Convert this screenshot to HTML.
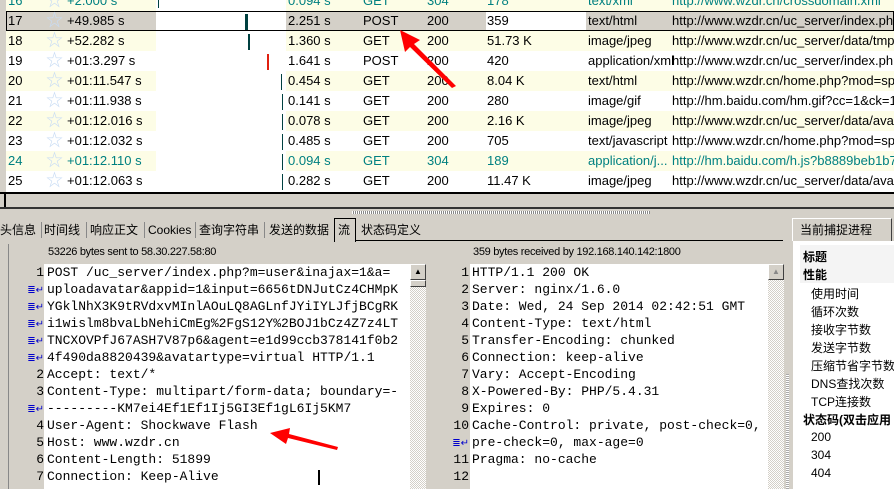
<!DOCTYPE html>
<html><head><meta charset="utf-8"><style>
*{margin:0;padding:0;box-sizing:border-box}
body{width:894px;height:489px;overflow:hidden;background:#d4d0c8;position:relative;font-family:"Liberation Sans","Noto Sans CJK SC",sans-serif;font-size:12px;color:#000}
.a{position:absolute;white-space:nowrap}
.mono{font-family:"Liberation Mono",monospace;font-size:13px}
.tab{position:absolute;top:219px;line-height:22px;font-size:12px;white-space:nowrap}
.sep{position:absolute;top:222px;width:1px;height:16px;background:#888}
</style></head><body>
<div class="a" style="left:6px;top:0;width:888px;height:193px;background:#fff"></div>
<div id="g"></div>
<div class="a" style="left:0;top:192px;width:894px;height:2px;background:#000"></div>
<div class="a" style="left:4px;top:194px;width:2px;height:14px;background:#000"></div>
<div class="a" style="left:0;top:207px;width:894px;height:2px;background:#333"></div>
<div class="a" style="left:352px;top:211px;width:298px;height:3px;background:repeating-linear-gradient(90deg,#fff 0 1px,#888 1px 2px)"></div>
<!-- tabs -->
<div class="tab" style="left:0">头信息</div><div class="sep" style="left:41px"></div>
<div class="tab" style="left:44px">时间线</div><div class="sep" style="left:86px"></div>
<div class="tab" style="left:90px">响应正文</div><div class="sep" style="left:144px"></div>
<div class="tab" style="left:148px">Cookies</div><div class="sep" style="left:195px"></div>
<div class="tab" style="left:199px">查询字符串</div><div class="sep" style="left:264px"></div>
<div class="tab" style="left:269px">发送的数据</div>
<div class="a" style="left:334px;top:218px;width:22px;height:24px;border:1px solid #000;border-bottom:none;background:#d4d0c8;font-size:12px;line-height:22px;padding-left:3px">流</div>
<div class="tab" style="left:361px">状态码定义</div>
<div class="a" style="left:355px;top:240px;width:428px;height:1px;background:#000"></div>
<div class="a" style="left:8px;top:244px;width:1px;height:245px;background:#888"></div>
<!-- left request -->
<div class="a" style="left:48px;top:246px;font-size:11px;letter-spacing:-0.3px">53226 bytes sent to 58.30.227.58:80</div>
<div class="a" style="left:44px;top:264px;width:366px;height:225px;background:#fff"></div>
<div class="a" style="left:410px;top:264px;width:16px;height:225px;background:repeating-conic-gradient(#fff 0 25%,#d4d0c8 0 50%) 0 0/2px 2px"></div>
<div class="a" style="left:410px;top:264px;width:16px;height:16px;background:#d4d0c8;border:1px solid;border-color:#fff #404040 #404040 #fff;font-size:8px;text-align:center;line-height:13px">▲</div>
<div class="a" style="left:410px;top:280px;width:16px;height:7px;background:#d4d0c8;border:1px solid;border-color:#fff #404040 #404040 #fff"></div>
<div id="req"></div>
<div class="a" style="left:318px;top:470px;width:2px;height:15px;background:#000"></div>
<!-- right response -->
<div class="a" style="left:473px;top:246px;font-size:11px;letter-spacing:-0.3px">359 bytes received by 192.168.140.142:1800</div>
<div class="a" style="left:470px;top:264px;width:298px;height:225px;background:#fff"></div>
<div class="a" style="left:768px;top:264px;width:16px;height:225px;background:repeating-conic-gradient(#fff 0 25%,#d4d0c8 0 50%) 0 0/2px 2px"></div>
<div class="a" style="left:768px;top:264px;width:16px;height:16px;background:#d4d0c8;border:1px solid;border-color:#fff #404040 #404040 #fff;font-size:8px;text-align:center;line-height:13px;color:#888">▲</div>
<div class="a" style="left:786px;top:374px;width:3px;height:115px;background:repeating-linear-gradient(#aaa 0 1px,#fff 1px 2px)"></div>
<div id="res"></div>
<!-- side panel -->
<div class="a" style="left:792px;top:218px;width:100px;height:23px;border:1px solid #fff;border-right-color:#404040;border-bottom:none;font-size:12px;line-height:22px;padding-left:7px">当前捕捉进程</div>
<div class="a" style="left:793px;top:241px;width:101px;height:248px;background:#fff"></div>
<div class="a" style="left:800px;top:245px;width:94px;height:38px;background:#f4f4f4"></div>
<div class="a" style="left:803px;top:249px;font-weight:bold;font-size:12px;line-height:17.5px">标题<br>性能</div>
<div class="a" style="left:811px;top:285px;font-size:12px;line-height:18px">使用时间<br>循环次数<br>接收字节数<br>发送字节数<br>压缩节省字节数<br>DNS查找次数<br>TCP连接数</div>
<div class="a" style="left:803px;top:411px;font-weight:bold;font-size:12px">状态码(双击应用</div>
<div class="a" style="left:811px;top:428px;font-size:12px;line-height:18px">200<br>304<br>404</div>
<svg class="a" style="left:0;top:0" width="894" height="489">
<polygon points="400,30 420,40 414,44 456,86 452,88 410,47 405,52" fill="#f00"/>
<polygon points="270,433 290,428 289,434 338,447 337,450 288,438 286,444" fill="#f00"/>
</svg>
<script>
var rows=[
[16,"+2.000 s",null,"0.094 s","GET","304","178","text/xml","http://www.wzdr.cn/crossdomain.xml",1],
[17,"+49.985 s",[245,3,"#004040"],"2.251 s","POST","200","359","text/html","http://www.wzdr.cn/uc_server/index.php",0],
[18,"+52.282 s",[248,2,"#004040"],"1.360 s","GET","200","51.73 K","image/jpeg","http://www.wzdr.cn/uc_server/data/tmp",0],
[19,"+01:3.297 s",[267,2,"#e02010"],"1.641 s","POST","200","420","application/xml","http://www.wzdr.cn/uc_server/index.php",0],
[20,"+01:11.547 s",[281,1,"#004040"],"0.454 s","GET","200","8.04 K","text/html","http://www.wzdr.cn/home.php?mod=spa",0],
[21,"+01:11.938 s",[282,1,"#004040"],"0.141 s","GET","200","280","image/gif","http://hm.baidu.com/hm.gif?cc=1&ck=1",0],
[22,"+01:12.016 s",[282,1,"#004040"],"0.078 s","GET","200","2.16 K","image/jpeg","http://www.wzdr.cn/uc_server/data/ava",0],
[23,"+01:12.032 s",[282,1,"#004040"],"0.485 s","GET","200","705","text/javascript","http://www.wzdr.cn/home.php?mod=spa",0],
[24,"+01:12.110 s",[282,1,"#004040"],"0.094 s","GET","304","189","application/j...","http://hm.baidu.com/h.js?b8889beb1b7",1],
[25,"+01:12.063 s",[282,1,"#004040"],"0.282 s","GET","200","11.47 K","image/jpeg","http://www.wzdr.cn/uc_server/data/ava",0]];
var h="";
rows.forEach(function(r,i){
 var top=-9+i*20, yel=(r[0]%2==0);
 var sel=r[0]==17;
 var bg=sel?"#d4d0c8":(yel?"#fdfde6":"#fff");
 var col=r[9]?"#008080":"#000";
 h+='<div class="a" style="left:6px;top:'+top+'px;width:150px;height:20px;background:'+bg+'"></div>';
 h+='<div class="a" style="left:286px;top:'+top+'px;width:608px;height:20px;background:'+bg+'"></div>';
 if(sel){h+='<div class="a" style="left:486px;top:'+top+'px;width:100px;height:20px;background:#fff"></div>';
  h+='<div class="a" style="left:6px;top:'+top+'px;width:888px;height:20px;border:1px solid #000"></div>';}
 var s='position:absolute;top:'+top+'px;line-height:20px;font-size:13px;color:'+col+';white-space:nowrap;';
 h+='<div style="'+s+'left:8px">'+r[0]+'</div>';
 h+='<div style="'+s+'left:46px;color:#c8dcf4;font-size:17px">☆</div>';
 h+='<div style="'+s+'left:67px">'+r[1]+'</div>';
 if(r[2])h+='<div class="a" style="left:'+r[2][0]+'px;top:'+(top+3)+'px;width:'+r[2][1]+'px;height:16px;background:'+r[2][2]+'"></div>';
 else h+='<div class="a" style="left:158px;top:'+top+'px;width:1px;height:17px;background:#004040"></div>';
 h+='<div style="'+s+'left:288px">'+r[3]+'</div>';
 h+='<div style="'+s+'left:363px">'+r[4]+'</div>';
 h+='<div style="'+s+'left:427px">'+r[5]+'</div>';
 h+='<div style="'+s+'left:487px">'+r[6]+'</div>';
 h+='<div style="'+s+'left:588px">'+r[7]+'</div>';
 h+='<div style="'+s+'left:672px">'+r[8]+'</div>';
});
document.getElementById("g").innerHTML=h;
var W='<span style="color:#00c;font-size:10px">≣↵</span>';
function block(lines,x,nx){var o="";lines.forEach(function(l,i){var t=264+i*17;
 o+='<div class="a mono" style="left:'+nx+'px;top:'+t+'px;width:'+(x-nx-3)+'px;text-align:right;line-height:17px">'+(l[0]=="w"?W:l[0])+'</div>';
 o+='<div class="a mono" style="left:'+x+'px;top:'+t+'px;line-height:17px">'+l[1].replace(/&/g,"&amp;")+'</div>';});return o;}
document.getElementById("req").innerHTML=block([
["1","POST /uc_server/index.php?m=user&inajax=1&a="],["w","uploadavatar&appid=1&input=6656tDNJutCz4CHMpK"],["w","YGklNhX3K9tRVdxvMInlAOuLQ8AGLnfJYiIYLJfjBCgRK"],["w","i1wislm8bvaLbNehiCmEg%2FgS12Y%2BOJ1bCz4Z7z4LT"],["w","TNCXOVPfJ67ASH7V87p6&agent=e1d99ccb378141f0b2"],["w","4f490da8820439&avatartype=virtual HTTP/1.1"],["2","Accept: text/*"],["3","Content-Type: multipart/form-data; boundary=-"],["w","---------KM7ei4Ef1Ef1Ij5GI3Ef1gL6Ij5KM7"],["4","User-Agent: Shockwave Flash"],["5","Host: www.wzdr.cn"],["6","Content-Length: 51899"],["7","Connection: Keep-Alive"]],47,12);
document.getElementById("res").innerHTML=block([
["1","HTTP/1.1 200 OK"],["2","Server: nginx/1.6.0"],["3","Date: Wed, 24 Sep 2014 02:42:51 GMT"],["4","Content-Type: text/html"],["5","Transfer-Encoding: chunked"],["6","Connection: keep-alive"],["7","Vary: Accept-Encoding"],["8","X-Powered-By: PHP/5.4.31"],["9","Expires: 0"],["10","Cache-Control: private, post-check=0,"],["w","pre-check=0, max-age=0"],["11","Pragma: no-cache"],["12",""]],472,440);
</script>
</body></html>
